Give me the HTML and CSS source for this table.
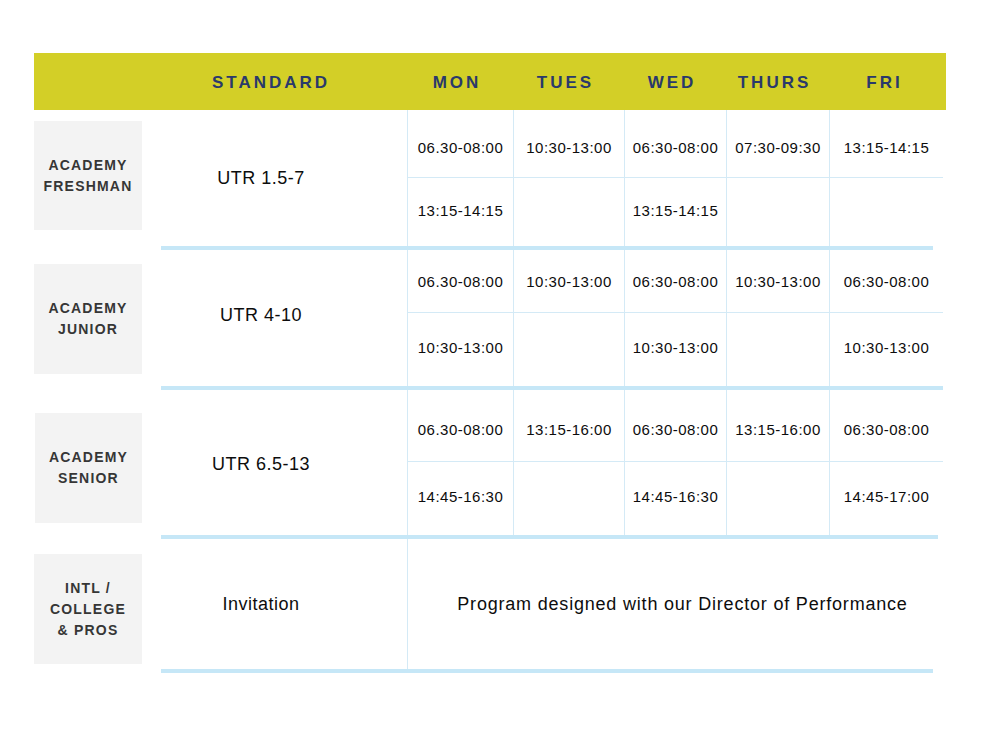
FILE: index.html
```html
<!DOCTYPE html>
<html lang="en">
<head>
<meta charset="utf-8">
<title>Academy Schedule</title>
<link rel="stylesheet" href="styles.css">
</head>
<body>
<div class="page">
  <div class="head">
    <div class="h-blank"></div>
    <div class="h-cell h-std">STANDARD</div>
    <div class="h-cell">MON</div>
    <div class="h-cell">TUES</div>
    <div class="h-cell">WED</div>
    <div class="h-cell">THURS</div>
    <div class="h-cell">FRI</div>
  </div>

  <section class="block">
    <div class="label l1">ACADEMY<br>FRESHMAN</div>
    <div class="main">
      <div class="grid g1">
        <div class="std">UTR 1.5-7</div>
        <div class="cell top">06.30-08:00</div>
        <div class="cell top">10:30-13:00</div>
        <div class="cell top">06:30-08:00</div>
        <div class="cell top">07:30-09:30</div>
        <div class="cell top">13:15-14:15</div>
        <div class="cell bottom">13:15-14:15</div>
        <div class="cell bottom"></div>
        <div class="cell bottom">13:15-14:15</div>
        <div class="cell bottom"></div>
        <div class="cell bottom"></div>
      </div>
      <div class="rule r-short"></div>
    </div>
  </section>

  <section class="block">
    <div class="label l2">ACADEMY<br>JUNIOR</div>
    <div class="main">
      <div class="grid g2">
        <div class="std">UTR 4-10</div>
        <div class="cell top">06.30-08:00</div>
        <div class="cell top">10:30-13:00</div>
        <div class="cell top">06:30-08:00</div>
        <div class="cell top">10:30-13:00</div>
        <div class="cell top">06:30-08:00</div>
        <div class="cell bottom">10:30-13:00</div>
        <div class="cell bottom"></div>
        <div class="cell bottom">10:30-13:00</div>
        <div class="cell bottom"></div>
        <div class="cell bottom">10:30-13:00</div>
      </div>
      <div class="rule r-long"></div>
    </div>
  </section>

  <section class="block">
    <div class="label l3">ACADEMY<br>SENIOR</div>
    <div class="main">
      <div class="grid g3">
        <div class="std">UTR 6.5-13</div>
        <div class="cell top">06.30-08:00</div>
        <div class="cell top">13:15-16:00</div>
        <div class="cell top">06:30-08:00</div>
        <div class="cell top">13:15-16:00</div>
        <div class="cell top">06:30-08:00</div>
        <div class="cell bottom">14:45-16:30</div>
        <div class="cell bottom"></div>
        <div class="cell bottom">14:45-16:30</div>
        <div class="cell bottom"></div>
        <div class="cell bottom">14:45-17:00</div>
      </div>
      <div class="rule r-mid"></div>
    </div>
  </section>

  <section class="block">
    <div class="label l4">INTL /<br>COLLEGE<br>&amp; PROS</div>
    <div class="main">
      <div class="grid g4">
        <div class="std">Invitation</div>
        <div class="cell program">Program designed with our Director of Performance</div>
      </div>
      <div class="rule r-short"></div>
    </div>
  </section>
</div>
</body>
</html>
```

FILE: styles.css
```css
* { box-sizing: border-box; }

body {
  margin: 0;
  background: #ffffff;
  font-family: "Liberation Sans", Arial, sans-serif;
  color: #111111;
}

.page {
  padding: 53px 0 0 34px;
  width: 1000px;
}

/* Header bar */
.head {
  display: grid;
  grid-template-columns: 127px 246px 106px 111px 102px 103px 117px;
  height: 57px;
  width: 912px;
  background: #d3cf27;
  align-items: center;
}

.h-cell {
  text-align: center;
  font-weight: bold;
  font-size: 17px;
  letter-spacing: 3px;
  color: #2a396b;
  padding-right: 6px;
  padding-top: 2px;
}

.h-std { padding-right: 26px; }

/* Blocks */
.block {
  display: flex;
  align-items: flex-start;
}

.label {
  width: 108px;
  height: 110px;
  margin-right: 19px;
  background: #f3f3f3;
  display: flex;
  align-items: center;
  justify-content: center;
  text-align: center;
  font-weight: bold;
  font-size: 14px;
  line-height: 21px;
  letter-spacing: 1.2px;
  color: #363636;
}

.l1 { margin-top: 11px; height: 109px; }
.l2 { margin-top: 14px; }
.l3 { margin-top: 23px; margin-left: 1px; width: 107px; }
.l4 { margin-top: 15px; }

.main { width: 785px; }

.grid {
  display: grid;
  grid-template-columns: 246px 106px 111px 102px 103px 114px;
}

.g1 { grid-template-rows: 68px 68px; }
.g2 { grid-template-rows: 63px 73px; }
.g3 { grid-template-rows: 72px 73px; }
.g4 { grid-template-rows: 130px; }

.std {
  grid-row: 1 / -1;
  display: flex;
  align-items: center;
  justify-content: center;
  padding-right: 46px;
  font-size: 18px;
  letter-spacing: 0.5px;
  color: #0d0d0d;
}

.g2 .std { padding-bottom: 5px; }
.g3 .std { padding-top: 4px; }

.cell {
  display: flex;
  align-items: center;
  justify-content: center;
  border-left: 1px solid #d4eaf6;
  font-size: 15px;
  letter-spacing: 0.5px;
  color: #0d0d0d;
}

.cell.top { border-bottom: 1px solid #d4eaf6; }

.g1 .top { padding-top: 7px; }
.g1 .bottom { padding-bottom: 4px; }
.g2 .bottom { padding-bottom: 4px; }
.g3 .top { padding-top: 8px; }
.g3 .bottom { padding-bottom: 4px; }

.program {
  grid-column: 2 / -1;
  font-size: 18px;
  letter-spacing: 0.8px;
  padding-left: 14px;
}

.rule {
  height: 4px;
  background: #c6e7f7;
}

.r-short { width: 772px; }
.r-mid { width: 777px; }
.r-long { width: 782px; }
```
